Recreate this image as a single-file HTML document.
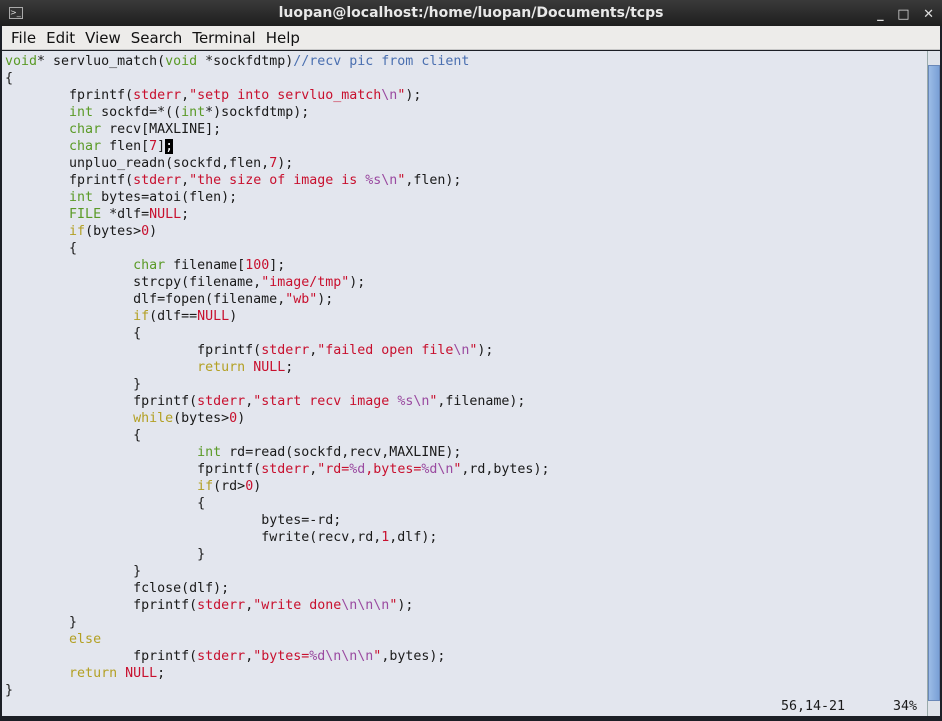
<!DOCTYPE html>
<html><head><meta charset="utf-8"><style>
*{margin:0;padding:0;box-sizing:border-box}
body{width:942px;height:721px;background:#1c1f26;position:relative;overflow:hidden;font-family:"DejaVu Sans","Liberation Sans",sans-serif}
#title{position:absolute;left:0;top:0;width:942px;height:26px;background:linear-gradient(#3a3a3a,#1e1e1e);color:#e8e8e8;font-weight:bold;font-size:14px;text-align:center;line-height:27px}
#icon{position:absolute;left:9px;top:7px;width:14px;height:12px;border:1px solid #aaa;background:#333;font-size:8px;line-height:10px;color:#ddd;text-align:left;font-weight:normal}
#ctl{position:absolute;right:8px;top:1px;color:#ddd;font-size:13px;font-weight:bold}
#menu{position:absolute;left:2px;top:26px;width:938px;height:24px;background:#edecea;border-bottom:1px solid #c8c8c8;font-size:15px;line-height:25px;color:#111}
#menu span{margin-left:9px;margin-right:1px}
#txt{position:absolute;left:2px;top:51px;width:925px;height:665px;background:#e3e6ee}
pre{position:absolute;left:3px;top:2px;font-family:"DejaVu Sans Mono","Liberation Mono",monospace;font-size:13.3px;line-height:17px;color:#1a1a1a;tab-size:8}
.t{color:#5a9a26}.k{color:#b3a024}.s{color:#c8102e}.f{color:#9a4aa0}.c{color:#4a6fb0}
.cur{background:#000;color:#fff}
#sb{position:absolute;left:927px;top:51px;width:13px;height:665px;background:#dfe3ea;border-left:1px solid #9aa}
#thumb{position:absolute;left:0;top:14px;width:12px;height:636px;background:linear-gradient(90deg,#9bbce6,#7aa0d6);border:1px solid #6a88b8}
.st{position:absolute;top:646px;font-family:"DejaVu Sans Mono",monospace;font-size:13.3px;color:#1a1a1a}
</style></head><body>
<div id="title"><div id="icon">&gt;_</div>luopan@localhost:/home/luopan/Documents/tcps<div id="ctl">_&nbsp;&nbsp;&nbsp;□&nbsp;&nbsp;&nbsp;✕</div></div>
<div id="menu"><span>File</span><span>Edit</span><span>View</span><span>Search</span><span>Terminal</span><span>Help</span></div>
<div id="txt"><pre><span class="t">void</span>* servluo_match(<span class="t">void</span> *sockfdtmp)<span class="c">//recv pic from client</span>
{
	fprintf(<span class="s">stderr</span>,<span class="s">"setp into servluo_match</span><span class="f">\n</span><span class="s">"</span>);
	<span class="t">int</span> sockfd=*((<span class="t">int</span>*)sockfdtmp);
	<span class="t">char</span> recv[MAXLINE];
	<span class="t">char</span> flen[<span class="s">7</span>]<span class="cur">;</span>
	unpluo_readn(sockfd,flen,<span class="s">7</span>);
	fprintf(<span class="s">stderr</span>,<span class="s">"the size of image is </span><span class="f">%s\n</span><span class="s">"</span>,flen);
	<span class="t">int</span> bytes=atoi(flen);
	<span class="t">FILE</span> *dlf=<span class="s">NULL</span>;
	<span class="k">if</span>(bytes&gt;<span class="s">0</span>)
	{
		<span class="t">char</span> filename[<span class="s">100</span>];
		strcpy(filename,<span class="s">"image/tmp"</span>);
		dlf=fopen(filename,<span class="s">"wb"</span>);
		<span class="k">if</span>(dlf==<span class="s">NULL</span>)
		{
			fprintf(<span class="s">stderr</span>,<span class="s">"failed open file</span><span class="f">\n</span><span class="s">"</span>);
			<span class="k">return</span> <span class="s">NULL</span>;
		}
		fprintf(<span class="s">stderr</span>,<span class="s">"start recv image </span><span class="f">%s\n</span><span class="s">"</span>,filename);
		<span class="k">while</span>(bytes&gt;<span class="s">0</span>)
		{
			<span class="t">int</span> rd=read(sockfd,recv,MAXLINE);
			fprintf(<span class="s">stderr</span>,<span class="s">"rd=</span><span class="f">%d</span><span class="s">,bytes=</span><span class="f">%d\n</span><span class="s">"</span>,rd,bytes);
			<span class="k">if</span>(rd&gt;<span class="s">0</span>)
			{
				bytes=-rd;
				fwrite(recv,rd,<span class="s">1</span>,dlf);
			}
		}
		fclose(dlf);
		fprintf(<span class="s">stderr</span>,<span class="s">"write done</span><span class="f">\n\n\n</span><span class="s">"</span>);
	}
	<span class="k">else</span>
		fprintf(<span class="s">stderr</span>,<span class="s">"bytes=</span><span class="f">%d\n\n\n</span><span class="s">"</span>,bytes);
	<span class="k">return</span> <span class="s">NULL</span>;
}</pre>
<div class="st" style="left:779px;top:648px">56,14-21</div><div class="st" style="left:891px;top:648px">34%</div>
</div>
<div id="sb"><div id="thumb"></div></div>
</body></html>
